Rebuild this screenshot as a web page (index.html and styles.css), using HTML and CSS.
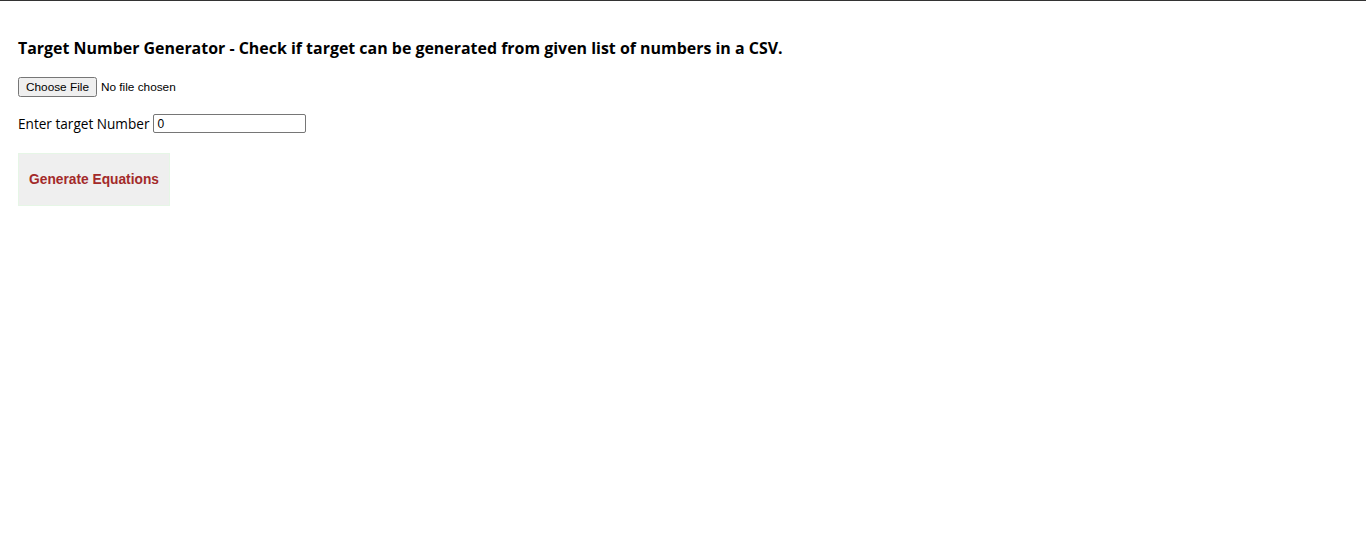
FILE: index.html
```html
<!DOCTYPE html>
<html>
<head>
<meta charset="utf-8">
<title>Target Number Generator</title>
<link rel="stylesheet" href="styles.css">
</head>
<body>
<div class="page">
  <h1 class="title">Target Number Generator - Check if target can be generated from given list of numbers in a CSV.</h1>
  <div class="row file-row"><input type="file" class="file"></div>
  <div class="row target-row"><label class="label" for="t">Enter target Number</label><input id="t" class="num" type="text" value="0"></div>
  <div class="row"><button class="gen">Generate Equations</button></div>
</div>
</body>
</html>
```
FILE: styles.css
```css
html, body { margin: 0; padding: 0; background: #fff; }
body { border-top: 1px solid #333; font-family: "Open Sans", "Noto Sans", sans-serif; color: #000; }
.page { padding: 27px 18px 0; }
.title { font-family: "Open Sans", sans-serif; font-size: 15.94px; font-weight: bold; margin: 10px 0 16px; line-height: 20px; }
.file-row { margin-bottom: 17px; }
.file { font-family: "Liberation Sans", Arial, sans-serif; font-size: 11.8px; }
.target-row { font-size: 13.6px; display: flex; align-items: center; gap: 4px; margin-bottom: 20px; }
.label { font-size: 13.6px; }
.num { width: 145px; height: 15px; font-family: "Liberation Sans", Arial, sans-serif; font-size: 12px; border: 1px solid #767676; border-radius: 2px; padding: 1px 3px; margin: 0; }
.gen { font-family: "Liberation Sans", Arial, sans-serif; font-weight: bold; font-size: 13.75px; color: #a32a2a; background: #efefef; border: 1px solid #e6f6e6; width: 152px; height: 53px; padding: 0; margin: 0; }
```
